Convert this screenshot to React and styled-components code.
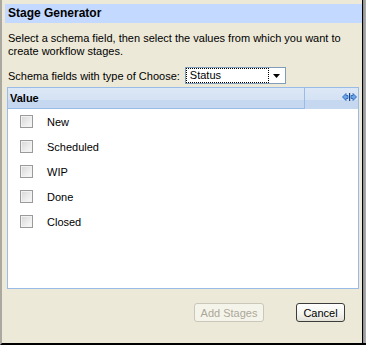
import styled, { createGlobalStyle } from "styled-components"

const GlobalStyle = createGlobalStyle`
    html, body {
        margin: 0;
        padding: 0;
        background: #ECE9D8;
    }
    body {
        font-family: "Liberation Sans", Arial, sans-serif;
    }
`

const Window = styled.div`
    box-sizing: border-box;
    width: 366px;
    height: 345px;
    display: flex;
    flex-direction: column;
    background: #ECE9D8;
    border-left: 2px solid #ABA99F;
    border-bottom: 2px solid #000;
    border-right: 1px solid #000;
    padding-top: 4px;
    position: relative;
`

const RightEdge = styled.div`
    position: absolute;
    top: 0;
    right: -1px;
    width: 4px;
    height: 100%;
    background: linear-gradient(90deg, #000 0, #000 1px, #8E8E8E 1px, #B0B0B0 100%);
`

const TitleBar = styled.div`
    margin-left: 3px;
    margin-right: 2px;
    height: 19px;
    line-height: 19px;
    padding-left: 3px;
    background: #C3D9FF;
    font-size: 12px;
    font-weight: bold;
    color: #000;
`

const Intro = styled.p`
    margin: 9px 0 0 6px;
    font-size: 11px;
    line-height: 13px;
    white-space: nowrap;
    color: #000;
`

const FieldRow = styled.div`
    display: flex;
    align-items: center;
    margin: 9px 0 0 6px;
    font-size: 11px;
    color: #000;
`

const Combo = styled.div`
    box-sizing: border-box;
    display: flex;
    align-items: stretch;
    margin-left: 5px;
    width: 101px;
    height: 17px;
    border: 1px solid #7F9DB9;
    background: #fff;
`

const ComboValue = styled.div`
    flex: 1;
    box-sizing: border-box;
    border: 1px dotted #000;
    padding-left: 3px;
    line-height: 13px;
    font-size: 11px;
`

const ComboArrow = styled.div`
    width: 16px;
    display: flex;
    align-items: center;
    justify-content: center;
`

const Grid = styled.div`
    box-sizing: border-box;
    margin: 3px 0 0 5px;
    width: 352px;
    height: 202px;
    border: 1px solid #99BBE8;
    background: #fff;
    display: flex;
    flex-direction: column;
`

const GridHeader = styled.div`
    display: flex;
    height: 21px;
    background: linear-gradient(180deg, #DDE8F6 0%, #D4E2F4 55%, #C6D8F0 56%, #C6D8F0 100%);
`

const HeaderCell = styled.div`
    box-sizing: border-box;
    width: 297px;
    border-right: 1px solid #99BBE8;
    border-bottom: 1px solid #99BBE8;
    padding-left: 2px;
    font-size: 11px;
    font-weight: bold;
    line-height: 20px;
    color: #000;
`

const HeaderTail = styled.div`
    flex: 1;
    display: flex;
    justify-content: flex-end;
    align-items: flex-start;
    padding: 5px 1px 0 0;
`

const Row = styled.label`
    display: flex;
    align-items: center;
    height: 25px;
    padding-left: 12px;
    font-size: 11px;
    color: #000;
`

const Check = styled.span`
    box-sizing: border-box;
    width: 13px;
    height: 13px;
    margin-right: 14px;
    border: 1px solid #9A9A9A;
    background: linear-gradient(135deg, #D6D6D6 0%, #EDEDED 60%, #FAFAFA 100%);
    box-shadow: inset 0 0 0 1px #F2F2F2;
`

const Footer = styled.div`
    display: flex;
    justify-content: flex-end;
    gap: 32px;
    margin-top: 14px;
    padding-right: 20px;
`

const Button = styled.button`
    box-sizing: border-box;
    height: 19px;
    width: ${props => props.$w}px;
    padding: 0;
    border-radius: 3px;
    font-family: "Liberation Sans", Arial, sans-serif;
    font-size: 11px;
    border: 1px solid ${props => props.disabled ? '#C9C7BA' : '#3C3C3C'};
    color: ${props => props.disabled ? '#ACA899' : '#000'};
    background: ${props => props.disabled
        ? '#F5F4EA'
        : 'linear-gradient(180deg, #FFFFFF 0%, #F3F3EF 60%, #E3E1D8 100%)'};
`

const stages = ['New', 'Scheduled', 'WIP', 'Done', 'Closed']

function ResizeIcon() {
    return (
        <svg width="15" height="8" viewBox="0 0 15 8">
            <path d="M0.5 4 L4 0.5 L4 2.5 L6 2.5 L6 5.5 L4 5.5 L4 7.5 Z" fill="#6FA6E8" stroke="#1E5FB8" strokeWidth="0.8" />
            <rect x="7" y="0" width="1.2" height="8" fill="#15428B" />
            <path d="M14.5 4 L11 0.5 L11 2.5 L9 2.5 L9 5.5 L11 5.5 L11 7.5 Z" fill="#6FA6E8" stroke="#1E5FB8" strokeWidth="0.8" />
        </svg>
    )
}

export default function App() {
    return (
        <>
            <GlobalStyle />
            <Window>
                <RightEdge />
                <TitleBar>Stage Generator</TitleBar>
                <Intro>
                    Select a schema field, then select the values from which you want to
                    <br />
                    create workflow stages.
                </Intro>
                <FieldRow>
                    <span>Schema fields with type of Choose:</span>
                    <Combo>
                        <ComboValue>Status</ComboValue>
                        <ComboArrow>
                            <svg width="7" height="4" viewBox="0 0 7 4">
                                <path d="M0 0 L7 0 L3.5 4 Z" fill="#000" />
                            </svg>
                        </ComboArrow>
                    </Combo>
                </FieldRow>
                <Grid>
                    <GridHeader>
                        <HeaderCell>Value</HeaderCell>
                        <HeaderTail><ResizeIcon /></HeaderTail>
                    </GridHeader>
                    {stages.map(stage => (
                        <Row key={stage}>
                            <Check />
                            {stage}
                        </Row>
                    ))}
                </Grid>
                <Footer>
                    <Button $w={70} disabled>Add Stages</Button>
                    <Button $w={49}>Cancel</Button>
                </Footer>
            </Window>
        </>
    )
}
